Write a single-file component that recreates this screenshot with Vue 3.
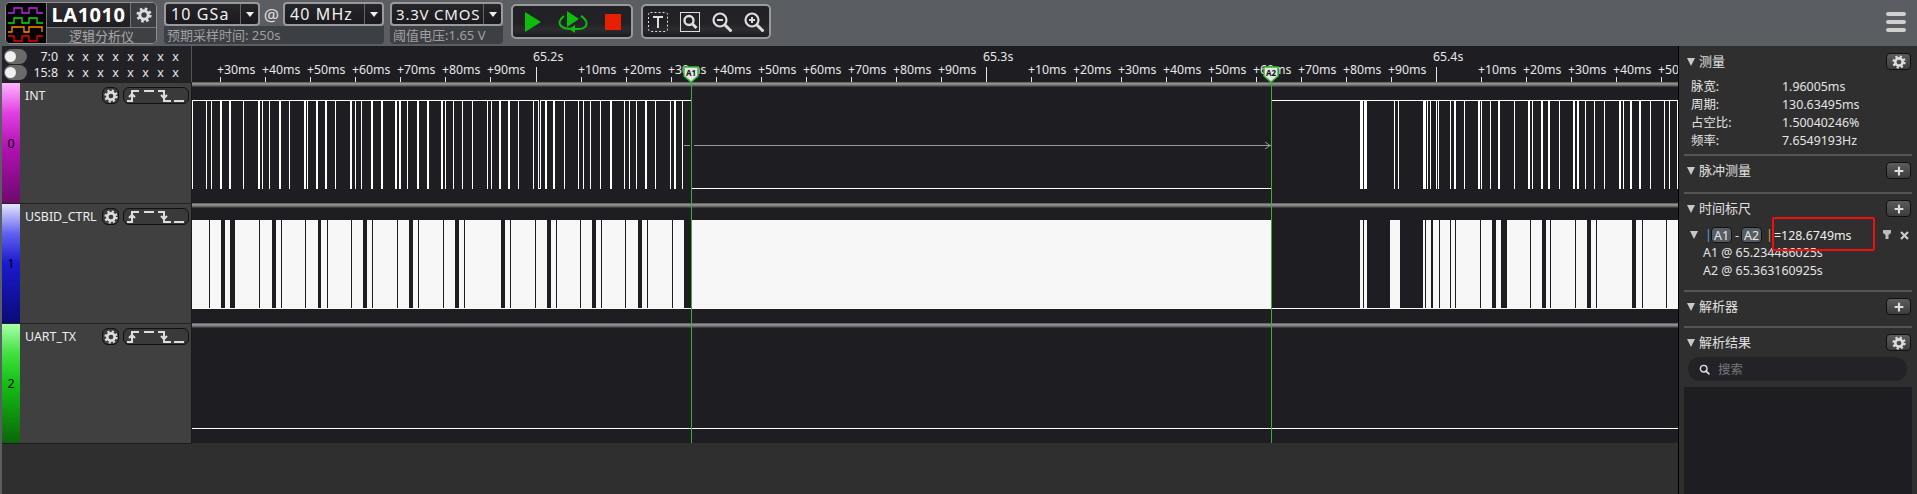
<script setup>
const cjk = (v) => Math.floor(190 + v / 3)
const z7 = (v) => Math.floor(1260 + v / 3)
const X0 = 192
const parse = (s, f) => s.split(' ').map((t) => {
  const wide = t.endsWith('w')
  return { x: f(parseFloat(t)) - X0, w: wide ? 2 : 1 }
})
const row0 = [
  ...parse('7 49 64 90w 117w 160 204w 217 238 267w 298 342w 352 378w 405w 436 480w 495 515 543w 573w 617w 629w 653 681w 711w 755w 766 791 818 847 893 904 928w 954w 985 1030 1044 1051 1067w 1091w 1123 1166 1180 1202 1230 1260w 1304 1317 1340 1367w 1397 1442 1454w 1478', cjk),
  ...parse('403 415 489w 492w 503 510 529 535 572 584w 613 656w 664 691 716w 763 805w 817 843w 866w 898 941w 953w 976 1003 1033 1077w 1089 1112w 1139w 1171 1214 1228 1251', z7),
  { x: z7(300) - X0, w: 3 },
  { x: z7(313) - X0, w: 3 }
]
const range = (a, b, f) => ({ x: f(a) - X0, w: Math.max(1, f(b) - f(a)) })
const thin6 = [58, 208, 274, 346, 412, 484, 547, 622, 685, 760, 823, 961, 1036, 1099, 1171, 1234, 1306, 1372, 1447]
const wide6 = [[93, 107], [120, 137], [246, 260], [384, 395], [519, 533], [657, 671], [795, 809], [933, 945], [1071, 1085], [1206, 1220], [1344, 1358], [1482, 1505]]
const wide7 = [[34, 300], [310, 313], [321, 390], [420, 489], [497, 500], [515, 519], [537, 541], [571, 574], [587, 590], [661, 664], [696, 710], [723, 741], [811, 814], [846, 858], [872, 875], [946, 949], [981, 995], [1009, 1012], [1116, 1130], [1146, 1149], [1219, 1222]]
const row1Gaps = [
  ...thin6.map((v) => ({ x: cjk(v) - X0, w: 1 })),
  ...wide6.map(([a, b]) => range(a, b, cjk)),
  ...wide7.map(([a, b]) => range(a, b, z7))
]
const pitch = 45.03
const base = 535.5 - X0
const ticks = []
for (let k = -7; k <= 25; k++) {
  const x = Math.round(base + k * pitch)
  const n = ((k % 10) + 10) % 10
  if (n === 0) {
    const s = (65.2 + k / 100).toFixed(1)
    ticks.push({ x, major: true, label: s + 's' })
  } else {
    ticks.push({ x, major: false, label: '+' + n * 10 + 'ms' })
  }
}
const channels = [
  { id: 0, name: 'INT', cls: 'c0' },
  { id: 1, name: 'USBID_CTRL', cls: 'c1' },
  { id: 2, name: 'UART_TX', cls: 'c2' }
]
const digital = [
  { label: '7:0' },
  { label: '15:8' }
]
const xs = Array(8).fill('x')
const measures = [
  ['脉宽:', '1.96005ms'],
  ['周期:', '130.63495ms'],
  ['占空比:', '1.50040246%'],
  ['频率:', '7.6549193Hz']
]
</script>

<template>
  <div class="app">
    <svg class="defs" width="0" height="0">
      <symbol id="gear" viewBox="0 0 16 16">
        <circle cx="8" cy="8" r="4.2" fill="none" stroke="currentColor" stroke-width="3" />
        <circle cx="8" cy="8" r="6.3" fill="none" stroke="currentColor" stroke-width="2.6" stroke-dasharray="2.5 2.45" />
      </symbol>
      <symbol id="plus" viewBox="0 0 16 16">
        <path d="M3 8h10M8 3v10" stroke="currentColor" stroke-width="2.4" fill="none" />
      </symbol>
      <symbol id="mag" viewBox="0 0 20 20">
        <circle cx="8.5" cy="8.5" r="6" fill="none" stroke="currentColor" stroke-width="2.6" />
        <path d="M13 13l5 5" stroke="currentColor" stroke-width="3.2" stroke-linecap="round" />
      </symbol>
    </svg>

    <header class="toolbar">
      <div class="brand">
        <svg class="logo" width="41" height="40" viewBox="0 0 41 40">
          <rect width="41" height="40" fill="#050505" />
          <path d="M3 10h6V5h8v5h7V5h8v5h6" stroke="#c224f2" fill="none" stroke-width="1.3" />
          <path d="M3 20h6v-5h8v5h7v-5h8v5h6" stroke="#0fe00f" fill="none" stroke-width="1.3" />
          <path d="M3 29h4v-5h12v5h5v-5h13v5" stroke="#ff8a00" fill="none" stroke-width="1.3" />
          <path d="M3 33h6v5h8v-5h7v5h8v-5h6" stroke="#f00000" fill="none" stroke-width="1.3" />
        </svg>
        <div class="brand-main">
          <div class="brand-top">
            <div class="brand-name">LA1010</div>
            <div class="brand-gear"><svg width="16" height="16"><use href="#gear" /></svg></div>
          </div>
          <div class="brand-sub">逻辑分析仪</div>
        </div>
      </div>

      <div class="sel-block rate">
        <div class="sel-row">
          <div class="sel s1"><span class="sel-text">10 GSa</span><span class="sel-arrow"><i /></span></div>
          <span class="at">@</span>
          <div class="sel s2"><span class="sel-text">40 MHz</span><span class="sel-arrow"><i /></span></div>
        </div>
        <div class="sel-note">预期采样时间: 250s</div>
      </div>

      <div class="sel-block volt">
        <div class="sel-row">
          <div class="sel s3"><span class="sel-text">3.3V CMOS</span><span class="sel-arrow small"><i /></span></div>
        </div>
        <div class="sel-note">阈值电压:1.65 V</div>
      </div>

      <div class="tgroup run">
        <svg width="16" height="20" viewBox="0 0 16 20"><path d="M0 0l16 10L0 20z" fill="#0dbd0d" /></svg>
        <svg width="30" height="24" viewBox="0 0 30 24">
          <path d="M9 1l12 8-12 8z" fill="#0dbd0d" />
          <path d="M6 6C2 9 0 13 3 16c3 3 8 3 11 3h7c5 0 9-3 7-8-1-2-3-4-5-5" fill="none" stroke="#0dbd0d" stroke-width="2" />
          <path d="M17 15v8l-6-4z" fill="#0dbd0d" />
        </svg>
        <svg width="16" height="16"><rect width="16" height="16" fill="#e61f00" /></svg>
      </div>

      <div class="tgroup tools">
        <svg width="20" height="20" viewBox="0 0 20 20">
          <rect x=".5" y=".5" width="19" height="19" rx="2" fill="none" stroke="#ddd" stroke-dasharray="2 2" />
          <path d="M5 5h10M10 5v11" stroke="#ddd" stroke-width="2" fill="none" />
        </svg>
        <svg class="mag-box" width="20" height="20" viewBox="0 0 20 20">
          <rect x=".5" y=".5" width="19" height="19" fill="none" stroke="#ddd" />
          <circle cx="9" cy="8.5" r="4.5" fill="none" stroke="#ddd" stroke-width="2.4" />
          <path d="M12.5 12l4 4" stroke="#ddd" stroke-width="3" />
        </svg>
        <svg width="20" height="20" viewBox="0 0 20 20">
          <circle cx="8" cy="8" r="6.5" fill="none" stroke="#ddd" stroke-width="2.2" />
          <path d="M5 8h6" stroke="#ddd" stroke-width="2" />
          <path d="M13 13l5.5 5.5" stroke="#ddd" stroke-width="3" stroke-linecap="round" />
        </svg>
        <svg width="20" height="20" viewBox="0 0 20 20">
          <circle cx="8" cy="8" r="6.5" fill="none" stroke="#ddd" stroke-width="2.2" />
          <path d="M5 8h6M8 5v6" stroke="#ddd" stroke-width="2" />
          <path d="M13 13l5.5 5.5" stroke="#ddd" stroke-width="3" stroke-linecap="round" />
        </svg>
      </div>

      <div class="spacer" />
      <div class="burger"><i /><i /><i /></div>
    </header>

    <div class="body">
      <div class="strip" />
      <main class="main">
        <div class="labels">
          <div class="digital">
            <div v-for="d in digital" :key="d.label" class="dig-row">
              <span class="toggle"><i /></span>
              <span class="dig-label">{{ d.label }}</span>
              <span v-for="(v, i) in xs" :key="i" class="dig-x">{{ v }}</span>
            </div>
          </div>
          <div v-for="c in channels" :key="c.id" class="chan" :class="'row' + c.id">
            <div class="chan-bar" :class="c.cls">{{ c.id }}</div>
            <div class="chan-info">
              <span class="chan-name">{{ c.name }}</span>
              <span class="chan-gear"><svg width="14" height="14"><use href="#gear" /></svg></span>
              <span class="edges">
                <svg width="14" height="14" viewBox="0 0 14 14"><path d="M0 12h5V2h7M2 8l3-3 3 3" fill="none" stroke="currentColor" stroke-width="2" /></svg>
                <svg width="12" height="14" viewBox="0 0 12 14"><path d="M1 2h10" stroke="currentColor" stroke-width="2" /></svg>
                <svg width="14" height="14" viewBox="0 0 14 14"><path d="M1 2h6v10h7M4 6l3 3 3-3" fill="none" stroke="currentColor" stroke-width="2" /></svg>
                <svg width="12" height="14" viewBox="0 0 12 14"><path d="M1 12h10" stroke="currentColor" stroke-width="2" /></svg>
              </span>
            </div>
          </div>
        </div>

        <div class="waves">
          <svg class="ruler" width="1486" height="36">
            <g v-for="t in ticks" :key="t.x">
              <rect :x="t.x" :y="t.major ? 21 : 31" width="1" :height="t.major ? 15 : 5" fill="#e6e6e6" />
              <text v-if="t.major" :x="t.x - 3" y="15" class="tick-text">{{ t.label }}</text>
              <text v-else :x="t.x - 3" y="28" class="tick-text">{{ t.label }}</text>
            </g>
          </svg>

          <div class="wave-row first">
            <svg width="1486" height="121" shape-rendering="crispEdges">
              <rect x="0" y="18" width="346" height="1" fill="#fff" />
              <rect x="348" y="18" width="151" height="1" fill="#fff" />
              <rect x="346" y="106" width="3" height="1" fill="#fff" />
              <rect x="499" y="106" width="580" height="1" fill="#fff" />
              <rect x="1079" y="18" width="407" height="1" fill="#fff" />
              <rect x="492" y="63" width="6" height="1" fill="#9a9a9a" />
              <rect x="502" y="63" width="577" height="1" fill="#9a9a9a" />
              <path d="M1073 60l5 3.5-5 3.5" fill="none" stroke="#9a9a9a" shape-rendering="auto" />
              <rect v-for="(p, i) in row0" :key="i" :x="p.x" y="18" :width="p.w" height="89" fill="#fff" />
            </svg>
          </div>
          <div class="wave-row">
            <svg width="1486" height="120" shape-rendering="crispEdges">
              <rect x="0" y="17" width="1486" height="89" fill="#f7f7f7" />
              <rect v-for="(g, i) in row1Gaps" :key="i" :x="g.x" y="17" :width="g.w" height="88" fill="#1e1e22" />
            </svg>
          </div>
          <div class="wave-row">
            <svg width="1486" height="120" shape-rendering="crispEdges">
              <rect x="0" y="105" width="1486" height="1" fill="#fff" />
            </svg>
          </div>

          <div class="cursor a1" />
          <div class="cursor a2" />
          <svg class="marker m1" width="16" height="17" viewBox="0 0 16 17">
            <path d="M1 1h14v9l-7 6-7-6z" fill="#e6e6e6" stroke="#33bb33" stroke-width="1.5" />
            <text x="8" y="9.5" class="marker-text">A1</text>
          </svg>
          <svg class="marker m2" width="16" height="17" viewBox="0 0 16 17">
            <path d="M1 1h14v9l-7 6-7-6z" fill="#e6e6e6" stroke="#33bb33" stroke-width="1.5" />
            <text x="8" y="9.5" class="marker-text">A2</text>
          </svg>
        </div>
      </main>

      <aside class="panel">
        <section class="sec measure">
          <div class="sec-head">
            <i class="tri" /><span class="sec-title">测量</span>
            <span class="sec-btn"><svg width="14" height="14"><use href="#gear" /></svg></span>
          </div>
          <div v-for="m in measures" :key="m[0]" class="m-row">
            <span class="m-key">{{ m[0] }}</span><span class="m-val">{{ m[1] }}</span>
          </div>
        </section>
        <section class="sec pulse">
          <div class="sec-head">
            <i class="tri" /><span class="sec-title">脉冲测量</span>
            <span class="sec-btn"><svg width="14" height="14"><use href="#plus" /></svg></span>
          </div>
        </section>
        <section class="sec timing">
          <div class="sec-head">
            <i class="tri" /><span class="sec-title">时间标尺</span>
            <span class="sec-btn"><svg width="14" height="14"><use href="#plus" /></svg></span>
          </div>
          <div class="t-row">
            <i class="tri t-tri" />
            <span class="pipe blue">|</span>
            <span class="badge">A1</span>
            <span class="dash">-</span>
            <span class="badge">A2</span>
            <span class="pipe orange">|</span>
            <span class="t-val">=128.6749ms</span>
            <svg class="funnel" width="8" height="10" viewBox="0 0 8 10"><path d="M0 0h8v3L5.500 5v4h-3V5L0 3z" fill="#bbb" /></svg>
            <svg class="close" width="9" height="9" viewBox="0 0 9 9"><path d="M1 1l7 7M8 1l-7 7" stroke="#ccc" stroke-width="2.2" /></svg>
            <span class="redbox" />
          </div>
          <div class="t-sub">A1 @ 65.234486025s</div>
          <div class="t-sub">A2 @ 65.363160925s</div>
        </section>
        <section class="sec decoder">
          <div class="sec-head">
            <i class="tri" /><span class="sec-title">解析器</span>
            <span class="sec-btn"><svg width="14" height="14"><use href="#plus" /></svg></span>
          </div>
        </section>
        <section class="results">
          <div class="sec-head">
            <i class="tri" /><span class="sec-title">解析结果</span>
            <span class="sec-btn"><svg width="14" height="14"><use href="#gear" /></svg></span>
          </div>
          <div class="search">
            <svg width="11" height="11"><use href="#mag" /></svg>
            <span>搜索</span>
          </div>
          <div class="list" />
        </section>
      </aside>
    </div>
  </div>
</template>

<style scoped>
.app {
  width: 1917px;
  height: 494px;
  overflow: hidden;
  display: flex;
  flex-direction: column;
  background: #2f2f2f;
  color: #e8e8e8;
  font-family: "Noto Sans", "Noto Sans CJK SC", sans-serif;
  font-size: 12.4px;
}
.defs { position: absolute; }
.toolbar {
  height: 46px;
  flex: none;
  display: flex;
  align-items: flex-start;
  background: #5a5e63;
  box-sizing: border-box;
  padding: 2px 11px 0 5px;
}
.brand {
  width: 152px;
  height: 42px;
  box-sizing: border-box;
  display: flex;
  border: 1px solid #909090;
  border-radius: 5px;
  overflow: hidden;
  background: #1e1e22;
}
.logo { flex: none; margin-left: -1px; }
.brand-main { flex: 1; display: flex; flex-direction: column; border-left: 1px solid #777; }
.brand-top { display: flex; height: 24px; border-bottom: 1px solid #777; }
.brand-name {
  flex: 1;
  text-align: center;
  font-weight: 700;
  font-size: 20px;
  line-height: 24px;
  color: #fff;
  letter-spacing: .5px;
  background: linear-gradient(#2e2e32, #1e1e22);
}
.brand-gear {
  width: 25px;
  border-left: 1px solid #777;
  color: #ddd;
  display: flex;
  align-items: center;
  justify-content: center;
  background: #3b3d40;
}
.brand-gear svg { display: block; }
.brand-sub {
  flex: 1;
  background: #3e4043;
  color: #a8a8a8;
  font-size: 13px;
  line-height: 16px;
  text-align: center;
}
.sel-block {
  margin-left: 7px;
  height: 42px;
  display: flex;
  flex-direction: column;
}
.rate { width: 220px; margin-left: 7px; }
.volt { width: 113px; margin-left: 6px; }
.sel-row { display: flex; align-items: center; height: 24px; flex: none; }
.sel {
  height: 24px;
  box-sizing: border-box;
  display: flex;
  align-items: center;
  border: 2px solid #9a9a9a;
  border-radius: 4px;
  background: linear-gradient(#26262a, #1a1a1e);
  overflow: hidden;
}
.s1 { width: 96px; }
.s2 { width: 101px; }
.s3 { width: 113px; }
.sel-text {
  flex: 1;
  padding-left: 5px;
  font-size: 16px;
  letter-spacing: 1.1px;
  color: #f0f0f0;
  line-height: 20px;
  white-space: nowrap;
}
.s3 .sel-text { padding-left: 4px; font-size: 15px; letter-spacing: .8px; }
.sel-arrow {
  width: 17px;
  height: 100%;
  flex: none;
  border-left: 1px solid #666;
  display: flex;
  align-items: center;
  justify-content: center;
}
.sel-arrow.small { width: 17px; }
.sel-arrow i {
  width: 0;
  height: 0;
  border-left: 4px solid transparent;
  border-right: 4px solid transparent;
  border-top: 5px solid #eee;
}
.at { width: 23px; text-align: center; font-size: 17px; color: #ddd; flex: none; }
.sel-note {
  flex: 1;
  background: #3c3f43;
  border-radius: 0 0 4px 4px;
  padding-left: 3px;
  color: #a0a0a0;
  font-size: 13px;
  line-height: 18px;
  white-space: nowrap;
}
.tgroup {
  height: 35px;
  margin-top: 2px;
  box-sizing: border-box;
  display: flex;
  align-items: center;
  border: 2px solid #9a9a9a;
  border-radius: 5px;
  background: linear-gradient(#222226 55%, #2c2c30 75%, #1c1c20);
}
.run { width: 122px; margin-left: 8px; padding-left: 12px; gap: 17px; }
.tools { width: 130px; margin-left: 8px; padding-left: 5px; gap: 12px; }
.spacer { flex: 1; }
.burger {
  width: 20px;
  margin-top: 10px;
  display: flex;
  flex-direction: column;
  gap: 4px;
}
.burger i {
  display: block;
  height: 4px;
  border-radius: 2px;
  background: #cfcfcf;
}
.body { flex: 1; display: flex; min-height: 0; }
.strip { width: 2px; flex: none; background: #5a5e63; }
.main {
  flex: 1;
  min-width: 0;
  display: flex;
  align-items: flex-start;
}
.labels { width: 190px; flex: none; border-bottom: 1px solid #1e1e22; }
.digital {
  height: 36px;
  box-sizing: border-box;
  background: #222226;
  border-right: 1px solid #555;
  padding-top: 2px;
}
.dig-row { height: 16.5px; display: flex; align-items: center; color: #e8e8e8; font-size: 12.4px; }
.toggle {
  width: 23px;
  height: 15px;
  margin-left: 2px;
  border-radius: 8px;
  background: #6a6a6a;
  flex: none;
  position: relative;
}
.toggle i {
  position: absolute;
  left: 1px;
  top: 2px;
  width: 11px;
  height: 11px;
  border-radius: 50%;
  background: #f0f0f0;
}
.dig-label { width: 31px; text-align: right; margin-right: 5px; flex: none; }
.dig-x { width: 15px; text-align: center; flex: none; }
.chan {
  height: 120px;
  display: flex;
  box-sizing: border-box;
  border-top: 1px solid #222;
}
.row0 { height: 121px; }
.chan-bar {
  width: 18px;
  flex: none;
  display: flex;
  align-items: center;
  justify-content: center;
  color: #000;
  font-size: 12.4px;
}
.c0 { background: linear-gradient(#ffb4ff, #e040e0 25%, #b010b0 55%, #6e0a6e); }
.c1 { background: linear-gradient(#e6e6ff, #6060f0 25%, #1a1ad0 50%, #0a0a78); }
.c2 { background: linear-gradient(#a8ffa8, #40e040 25%, #14c014 50%, #0a660a); }
.chan-info {
  flex: 1;
  background: #404040;
  border-right: 1px solid #1a1a1a;
  display: flex;
  align-items: flex-start;
  padding-top: 4px;
  padding-left: 5px;
  position: relative;
}
.chan-name { flex: 1; line-height: 18px; color: #eee; white-space: nowrap; font-size: 12.4px; }
.chan-gear, .edges {
  height: 17px;
  border: 1px solid #111;
  border-radius: 6px;
  background: #3a3a3a;
  color: #ddd;
  display: flex;
  align-items: center;
  justify-content: center;
  box-sizing: border-box;
  flex: none;
}
.chan-gear { width: 17px; margin-right: 4px; }
.edges { width: 66px; margin-right: 2px; gap: 2px; }
.waves {
  width: 1486px;
  flex: none;
  position: relative;
  overflow: hidden;
}
.ruler { display: block; background: #1e1e22; }
.tick-text { fill: #e8e8e8; font-size: 12.3px; }
.wave-row {
  height: 120px;
  background: linear-gradient(#555 0, #999 35%, #777 60%, #2a2a2e 100%) top / 100% 5px no-repeat, #1e1e22;
}
.wave-row.first { height: 121px; }
.wave-row svg { display: block; }
.cursor {
  position: absolute;
  top: 35px;
  bottom: 0;
  width: 1px;
  background: #38b038;
}
.a1 { left: 499px; }
.a2 { left: 1079px; }
.marker { position: absolute; top: 20px; }
.m1 { left: 491px; }
.m2 { left: 1071px; }
.marker-text { font-size: 8px; font-weight: 700; fill: #111; text-anchor: middle; }
.panel {
  width: 239px;
  flex: none;
  box-sizing: border-box;
  border-left: 1px solid #000;
  background: #2f2f2f;
  padding: 0 5px;
  display: flex;
  flex-direction: column;
}
.sec { border-bottom: 2px solid #555; }
.sec-head {
  display: flex;
  align-items: center;
  height: 17px;
  margin-bottom: 0;
  padding: 6px 1px 0 3px;
  box-sizing: content-box;
  color: #e0e0e0;
}
.tri {
  width: 0;
  height: 0;
  border-left: 4.5px solid transparent;
  border-right: 4.5px solid transparent;
  border-top: 8px solid #c8c8c8;
  flex: none;
}
.sec-title { flex: 1; margin-left: 4px; font-size: 13px; line-height: 17px; }
.sec-btn {
  width: 25px;
  height: 17px;
  box-sizing: border-box;
  border: 1px solid #111;
  border-radius: 4px;
  background: linear-gradient(#5c5c5c, #3c3c3c);
  color: #ddd;
  display: flex;
  align-items: center;
  justify-content: center;
}
.measure { height: 109px; padding-top: 0; margin-top: 1px; box-sizing: border-box; }
.m-row {
  display: flex;
  height: 18px;
  line-height: 18px;
  padding-left: 7px;
  font-size: 12.4px;
  color: #e4e4e4;
}
.measure .sec-head { margin-bottom: 8px; }
.m-key { width: 91px; }
.pulse { height: 38px; box-sizing: border-box; }
.timing { height: 98px; box-sizing: border-box; }
.t-row {
  position: relative;
  display: flex;
  align-items: center;
  height: 18px;
  margin-top: 9px;
  padding-left: 6px;
}
.t-tri { margin-right: 7px; }
.pipe { font-size: 12.4px; line-height: 14px; width: 2px; }
.blue { color: #5aa0e6; }
.orange { color: #e6a040; }
.badge {
  margin-left: 4px;
  width: 21px;
  height: 16px;
  line-height: 15px;
  text-align: center;
  box-sizing: border-box;
  border: 1px solid #111;
  border-radius: 4px;
  background: #565c63;
  font-size: 12.4px;
  color: #e8e8e8;
}
.dash { margin-left: 3px; margin-right: -3px; width: 5px; }
.orange { margin-left: 4px; }
.t-val { margin-left: 6px; width: 109px; font-size: 12.4px; white-space: nowrap; color: #eee; flex: none; }
.funnel { margin-right: 9px; flex: none; }
.close { flex: none; }
.redbox {
  position: absolute;
  left: 88px;
  top: -9px;
  width: 103px;
  height: 34px;
  box-sizing: border-box;
  border: 2px solid #f01010;
  border-radius: 2px;
}
.t-sub { height: 18px; line-height: 18px; padding-left: 19px; font-size: 12.4px; color: #e4e4e4; }
.decoder { height: 36px; box-sizing: border-box; }
.results { flex: 1; display: flex; flex-direction: column; }
.search {
  margin: 6px 5px 6px 4px;
  height: 24px;
  border-radius: 12px;
  background: #232327;
  display: flex;
  align-items: center;
  padding-left: 11px;
  color: #777;
  font-size: 12.4px;
  gap: 8px;
  flex: none;
}
.search svg { color: #ddd; }
.list { flex: 1; background: #1e1e22; margin-right: 0; }
</style>
